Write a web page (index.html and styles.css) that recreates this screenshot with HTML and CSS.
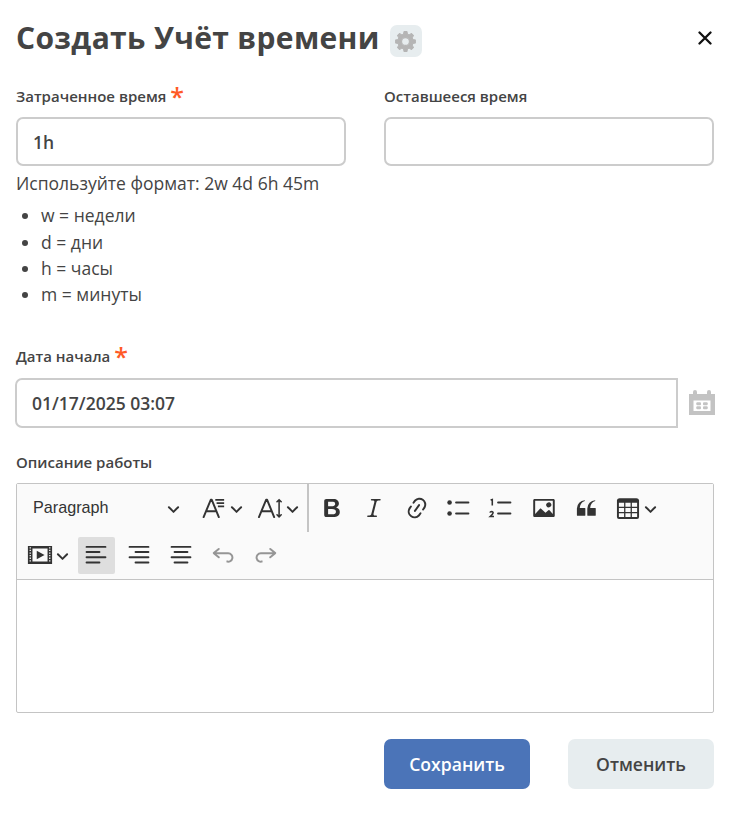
FILE: index.html
```html
<!DOCTYPE html>
<html lang="ru">
<head>
<meta charset="utf-8">
<title>Создать Учёт времени</title>
<link rel="stylesheet" href="styles.css">
</head>
<body>
<svg class="defs" width="0" height="0">
  <symbol id="arrow" viewBox="0 0 10 10"><path d="M.941 4.523a.75.75 0 1 1 1.06-1.06l3.006 3.005 3.005-3.005a.75.75 0 1 1 1.06 1.06l-3.549 3.55a.75.75 0 0 1-1.168-.136L.941 4.523z"/></symbol>
</svg>
<form class="dialog">
  <header class="head">
    <h1>Создать Учёт времени</h1>
    <button type="button" class="gear"><svg viewBox="0 0 20 20"><path fill-rule="evenodd" stroke-width="1" stroke-linejoin="round" d="M8.600.6h2.800l.5 2.400 1.700.7L15.700 2.400l1.900 1.900-1.300 2.100.7 1.700 2.400.5v2.800l-2.400.5-.7 1.700 1.300 2.100-1.900 1.900-2.100-1.300-1.700.7-.5 2.400H8.600l-.5-2.400-1.700-.7-2.100 1.300-1.900-1.900 1.300-2.100-.7-1.700-2.400-.5V8.600L3 8.100l.7-1.700L2.400 4.300l1.900-1.900 2.100 1.300L8.100 3zM10 6.300a3.700 3.700 0 1 0 0 7.400 3.700 3.700 0 0 0 0-7.400z"/></svg></button>
    <button type="button" class="close"><svg viewBox="0 0 14 14"><path d="M1.500 1.500l11 11M12.500 1.500l-11 11"/></svg></button>
  </header>
  <div class="pair">
    <div class="field">
      <label>Затраченное время <span class="req">*</span></label>
      <input class="box" type="text" value="1h">
      <p class="hint">Используйте формат: 2w 4d 6h 45m</p>
      <ul class="units"><li>w = недели</li><li>d = дни</li><li>h = часы</li><li>m = минуты</li></ul>
    </div>
    <div class="field">
      <label>Оставшееся время</label>
      <input class="box" type="text">
    </div>
  </div>
  <div class="field date">
    <label>Дата начала <span class="req">*</span></label>
    <div class="date-row">
      <input class="box" type="text" value="01/17/2025 03:07">
      <svg class="cal" viewBox="0 0 26 26"><path fill-rule="evenodd" d="M0 4h4V2a2 2 0 0 1 4 0v2h10V2a2 2 0 0 1 4 0v2h4v21H0zM4.500 10.500v10.500h17V10.500z"/><rect x="7.300" y="12.300" width="4.700" height="2.900" rx="1"/><rect x="14" y="12.300" width="4.700" height="2.900" rx="1"/><rect x="7.300" y="16.300" width="4.700" height="2.900" rx="1"/><rect x="14" y="16.300" width="4.700" height="2.900" rx="1"/></svg>
    </div>
  </div>
  <div class="field work">
    <label>Описание работы</label>
    <div class="editor">
      <div class="toolbar">
        <div class="row">
          <div class="heading"><span>Paragraph</span><svg class="arr"><use href="#arrow"/></svg></div>
          <div class="drop"><svg class="ico" viewBox="0 0 20 20"><path class="line" d="M2 17L7.500 3.700h.8L13.700 17M4 12.500h7.700"/><path class="line thin" d="M11 3.700h6.800M12 6.200h5.800M13 8.700h4.800"/></svg><svg class="arr"><use href="#arrow"/></svg></div>
          <div class="drop size"><svg class="ico" viewBox="0 0 20 20"><path class="line" d="M1.500 17L7 3.700h.8L13.200 17M3.500 12.500h7.700"/><path class="line thin-round" d="M17 3.700v13M15.400 5.200l1.600-1.600 1.600 1.600M15.400 15.200l1.600 1.600 1.600-1.600"/></svg><svg class="arr"><use href="#arrow"/></svg></div>
          <i class="sep"></i>
          <div class="btn"><svg class="ico" viewBox="0 0 20 20"><path d="M10.187 17H5.773c-.637 0-1.092-.138-1.364-.415-.273-.277-.409-.718-.409-1.323V4.738c0-.617.14-1.062.419-1.332.279-.27.73-.406 1.354-.406h4.68c.69 0 1.288.041 1.793.124.506.083.96.242 1.36.478.341.197.644.447.906.75a3.262 3.262 0 0 1 .808 2.162c0 1.401-.722 2.426-2.167 3.075C15.05 10.175 16 11.315 16 13.01a3.756 3.756 0 0 1-2.296 3.504 6.1 6.1 0 0 1-1.517.377c-.571.073-1.238.11-2 .11zm-.217-6.217H7v4.087h3.069c1.977 0 2.965-.69 2.965-2.072 0-.707-.256-1.22-.768-1.537-.512-.319-1.277-.478-2.296-.478zM7 5.13v3.619h2.606c.729 0 1.292-.067 1.69-.2a1.6 1.6 0 0 0 .91-.765c.165-.267.247-.566.247-.897 0-.707-.26-1.176-.778-1.409-.519-.232-1.31-.348-2.375-.348H7z"/></svg></div>
          <div class="btn"><svg class="ico" viewBox="0 0 20 20"><path d="m9.586 14.633.021.004c-.036.335.095.655.393.962.082.083.173.15.274.201h1.474a.6.6 0 1 1 0 1.2H5.304a.6.6 0 0 1 0-1.2h1.15c.474-.07.809-.182 1.005-.334.157-.122.291-.32.404-.597l2.416-9.55a1.053 1.053 0 0 0-.281-.823 1.12 1.12 0 0 0-.442-.296H8.15a.6.6 0 0 1 0-1.2h6.443a.6.6 0 1 1 0 1.2h-1.195c-.376.056-.65.155-.823.296-.215.175-.423.439-.623.79l-2.366 9.347z"/></svg></div>
          <div class="btn"><svg class="ico" viewBox="0 0 20 20"><path d="m11.077 15 .991-1.416a.75.75 0 1 1 1.229.86l-1.148 1.64a.748.748 0 0 1-.217.206 5.251 5.251 0 0 1-8.503-5.955.741.741 0 0 1 .12-.274l1.147-1.639a.75.75 0 1 1 1.228.86L4.933 10.7l.006.003a3.75 3.75 0 0 0 6.132 4.294l.006.004zm5.494-5.335a.748.748 0 0 1-.12.274l-1.147 1.639a.75.75 0 1 1-1.228-.86l.86-1.23a3.75 3.75 0 0 0-6.144-4.301l-.86 1.229a.75.75 0 0 1-1.229-.86l1.148-1.64a.748.748 0 0 1 .217-.206 5.251 5.251 0 0 1 8.503 5.955zm-4.563-2.532a.75.75 0 0 1 .184 1.045l-3.155 4.505a.75.75 0 1 1-1.229-.86l3.155-4.506a.75.75 0 0 1 1.045-.184z"/></svg></div>
          <div class="btn"><svg class="ico" viewBox="0 0 20 20"><path class="line" d="M7.750 5.750h9.500M7.750 14.250h9.500"/><circle cx="2.750" cy="5.750" r="1.750"/><circle cx="2.750" cy="14.250" r="1.750"/></svg></div>
          <div class="btn"><svg class="ico" viewBox="0 0 20 20"><path class="line" d="M7.750 5.750h9.500M7.750 14.250h9.500"/><path class="num" d="M2 3.900L3.300 3.500V8M1.500 13.600Q1.700 12.700 2.800 12.700 4 12.800 3.900 13.800 3.800 14.600 1.700 16.600H4.600"/></svg></div>
          <div class="btn"><svg class="ico" viewBox="0 0 20 20"><path d="M6.910 10.540c.26-.23.64-.21.88.03l3.360 3.140 2.230-2.060a.64.64 0 0 1 .87 0l2.520 2.970V4.500H3.200v10.120l3.710-4.080zm10.270-7.510c.6 0 1.090.47 1.090 1.050v11.840c0 .59-.49 1.060-1.090 1.060H2.790c-.6 0-1.090-.47-1.090-1.060V4.080c0-.58.49-1.050 1.100-1.050h14.380zm-5.220 5.560a1.960 1.960 0 1 1 3.400-1.960 1.960 1.960 0 0 1-3.400 1.960z"/></svg></div>
          <div class="btn"><svg class="ico" viewBox="0 0 20 20"><path id="q" d="M3 10.423a6.500 6.500 0 0 1 6.056-6.408l.038.670C6.448 5.423 5.354 7.663 5.220 10H9c.552 0 .5.432.5.986v4.511c0 .554-.448.503-1 .503h-5c-.552 0-.5-.449-.5-1.003v-4.574z"/><use href="#q" x="8"/></svg></div>
          <div class="drop"><svg class="ico" viewBox="0 0 20 20"><path d="M3 6v3h4V6H3zm0 4v3h4v-3H3zm0 4v3h4v-3H3zm5 3h4v-3H8v3zm5 0h4v-3h-4v3zm4-4v-3h-4v3h4zm0-4V6h-4v3h4zm1.500 8a1.500 1.500 0 0 1-1.500 1.500H3A1.500 1.500 0 0 1 1.500 17V4c.222-.863 1.068-1.500 2-1.500h13c.932 0 1.778.637 2 1.500v13zM12 13v-3H8v3h4zm0-4V6H8v3h4z"/></svg><svg class="arr"><use href="#arrow"/></svg></div>
        </div>
        <div class="row second">
          <div class="drop"><svg class="ico" viewBox="0 0 20 20"><path fill-rule="evenodd" d="M.7 3h18.600v14H.7zM4.200 5v10h11.600V5zM2 4v1h1V4zm0 2v1h1V6zm0 2v1h1V8zm0 2v1h1v-1zm0 2v1h1v-1zm0 2v1h1v-1zM17 4v1h1V4zm0 2v1h1V6zm0 2v1h1V8zm0 2v1h1v-1zm0 2v1h1v-1zm0 2v1h1v-1z"/><path d="M7.500 6.800v6.400l6-3.200z"/></svg><svg class="arr"><use href="#arrow"/></svg></div>
          <div class="btn on"><svg class="ico" viewBox="0 0 20 20"><path class="line" d="M2.750 3.750h14.500M2.750 7.750h9.900M2.750 11.750h14.500M2.750 15.750h9.900"/></svg></div>
          <div class="btn"><svg class="ico" viewBox="0 0 20 20"><path class="line" d="M2.750 3.750h14.500M7.350 7.750h9.900M2.750 11.750h14.500M7.350 15.750h9.900"/></svg></div>
          <div class="btn"><svg class="ico" viewBox="0 0 20 20"><path class="line" d="M2.750 3.750h14.500M5.050 7.750h9.900M2.750 11.750h14.500M5.050 15.750h9.900"/></svg></div>
          <div class="btn off"><svg class="ico" viewBox="0 0 20 20"><path id="u" d="m5.042 9.367 2.189 1.837a.75.75 0 0 1-.965 1.149l-3.788-3.180a.747.747 0 0 1-.21-.284.75.75 0 0 1 .17-.945L6.230 4.762a.75.75 0 1 1 .964 1.150L4.863 7.866h8.917A.75.75 0 0 1 14 7.900a4 4 0 1 1-1.477 7.718l.344-1.489a2.500 2.500 0 1 0 1.094-4.730l.008-.032H5.042z"/></svg></div>
          <div class="btn off"><svg class="ico" viewBox="0 0 20 20"><use href="#u" transform="matrix(-1 0 0 1 20 0)"/></svg></div>
        </div>
      </div>
      <div class="content"></div>
    </div>
  </div>
  <footer class="actions">
    <button type="button" class="save">Сохранить</button>
    <button type="button" class="cancel">Отменить</button>
  </footer>
</form>
</body>
</html>
```
FILE: styles.css
```css
* { box-sizing: border-box; }
body { margin: 0; background: #fff; color: #444; font-family: "Open Sans", sans-serif; }
.defs { display: block; }
svg { display: block; flex: none; }
button { border: 0; padding: 0; font: inherit; color: inherit; }
.dialog { padding: 0 21px 0 16px; }
.head { display: flex; height: 81px; }
h1 { margin: 17px 0 0; font-size: 30px; line-height: 41px; font-weight: 700; letter-spacing: .34px; white-space: nowrap; }
.gear { width: 32px; height: 32px; margin: 25px 0 0 10px; border-radius: 7px; background: #e7edef; display: grid; place-items: center; }
.gear svg { width: 21px; height: 21px; fill: #b5b5b5; stroke: #b5b5b5; }
.close { margin: 30.5px 2.5px 0 auto; width: 14px; height: 14px; background: none; }
.close svg { width: 14px; height: 14px; stroke: #111; stroke-width: 2.3; stroke-linecap: round; }
.pair { display: grid; grid-template-columns: 330px 330px; gap: 38px; height: 260px; }
label { display: block; height: 36px; font-size: 15px; line-height: 30px; font-weight: 600; white-space: nowrap; }
.req { display: inline-block; height: 24px; font-size: 25px; line-height: 24px; font-weight: 600; vertical-align: -4px; color: #ff5a26; }
.box { display: block; width: 100%; height: 49px; padding: 0 15px; border: 2px solid #ccc; border-radius: 7px; font: 600 17.5px "Open Sans", sans-serif; color: #444; background: #fff; outline: 0; }
.hint { margin: 4px 0 0; font-size: 17.52px; line-height: 26px; white-space: nowrap; }
.units { margin: 6.4px 0 0; padding-left: 25px; font-size: 17.52px; line-height: 26.3px; }
.date { height: 106px; }
.date-row { display: flex; margin: 1px 0 0 -1px; }
.date-row .box { width: 663px; height: 50px; border-radius: 7px 0 0 7px; flex: none; }
.cal { width: 26px; height: 26px; margin: 12px 0 0 10.5px; fill: #c3c3c3; }
.editor { height: 230px; border: 1px solid #c4c4c4; border-radius: 2px; }
.toolbar { height: 96px; background: #fafafa; border-bottom: 1px solid #c4c4c4; }
.row { display: flex; height: 48px; align-items: center; padding-left: 5px; }
.row > .btn .ico, .row > .drop .ico { margin-top: .5px; }
.heading { width: 174px; height: 37px; display: flex; align-items: center; justify-content: space-between; padding: 0 16px 0 11px; font: 16.2px "Liberation Sans", sans-serif; color: #333; }
.heading span { margin-top: -2px; }
.ico { width: 26px; height: 26px; fill: #333; }
.arr { width: 13px; height: 13px; fill: #333; }
.line { fill: none; stroke: #333; stroke-width: 1.5; stroke-linecap: round; stroke-linejoin: round; }
.thin { stroke-width: 1.3; stroke-linecap: butt; }
.thin-round { stroke-width: 1.2; }
.num { fill: none; stroke: #333; stroke-width: 1.2; }
.btn { width: 37px; height: 37px; margin-right: 5.35px; display: grid; place-items: center; border-radius: 2px; flex: none; }
.drop { display: flex; align-items: center; gap: 3px; width: 55.5px; padding-left: 5px; flex: none; }
.sep { width: 2px; height: 48px; background: #c4c4c4; margin-right: 4.4px; flex: none; }
.second { height: 46px; padding-left: 5.4px; }
.on { background: #dedede; }
.off { opacity: .5; }
.actions { display: flex; justify-content: flex-end; gap: 38px; margin-top: 26px; }
.actions button { width: 146px; height: 50px; border-radius: 7px; font-size: 17.6px; font-weight: 600; }
.actions .save { background: #4b74b8; color: #fff; }
.actions .cancel { background: #e7edef; }
```
